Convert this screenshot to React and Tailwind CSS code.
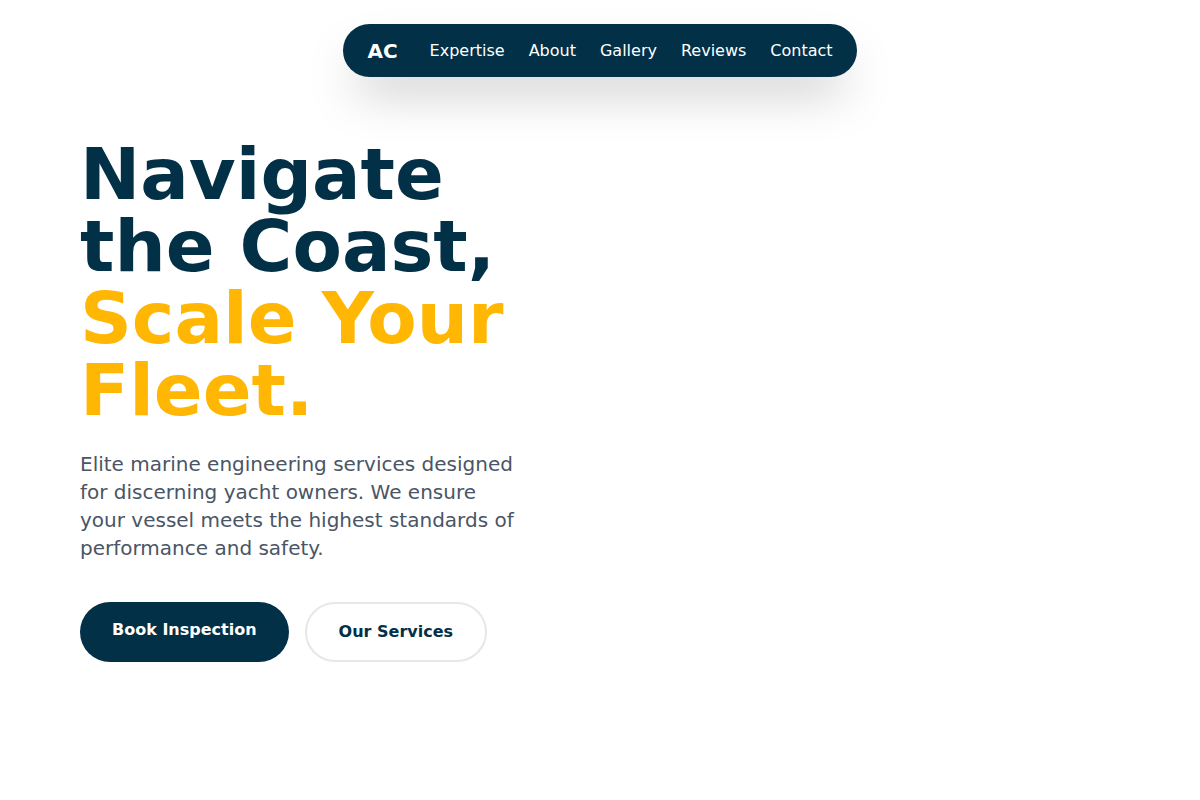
import React from 'react';

const links = ['Expertise', 'About', 'Gallery', 'Reviews', 'Contact'];

const App = () => {
  return (
    <div className="min-h-screen bg-white font-['DejaVu_Sans',sans-serif]">
      {/* --- Floating nav pill --- */}
      <div className="flex justify-center pt-6">
        <nav className="flex items-center gap-8 px-6 py-[12.5px] bg-[#023047] rounded-full shadow-2xl">
          <span className="text-xl leading-7 font-bold text-white">AC</span>
          <ul className="flex items-center gap-6">
            {links.map((link) => (
              <li key={link}>
                <a href={`#${link.toLowerCase()}`} className="text-base text-white">
                  {link}
                </a>
              </li>
            ))}
          </ul>
        </nav>
      </div>

      {/* --- Hero --- */}
      <section className="px-20 pt-[61px]">
        <div className="max-w-md">
          <h1 className="text-7xl leading-none font-bold text-[#023047]">
            Navigate the Coast,{' '}
            <span className="text-[#ffb703]">Scale Your Fleet.</span>
          </h1>
          <p className="mt-6 max-w-[440px] text-xl leading-7 text-gray-600">
            Elite marine engineering services designed for discerning yacht owners. We ensure
            your vessel meets the highest standards of performance and safety.
          </p>
          <div className="mt-10 flex gap-4">
            <a href="#contact" className="flex items-start px-8 py-4 rounded-full bg-[#023047] text-base font-bold text-white">
              Book Inspection
            </a>
            <a href="#expertise" className="flex items-start px-8 py-4 rounded-full border-2 border-gray-200 bg-white text-base font-bold text-[#023047]">
              Our Services
            </a>
          </div>
        </div>
      </section>
    </div>
  );
};

export default App;
